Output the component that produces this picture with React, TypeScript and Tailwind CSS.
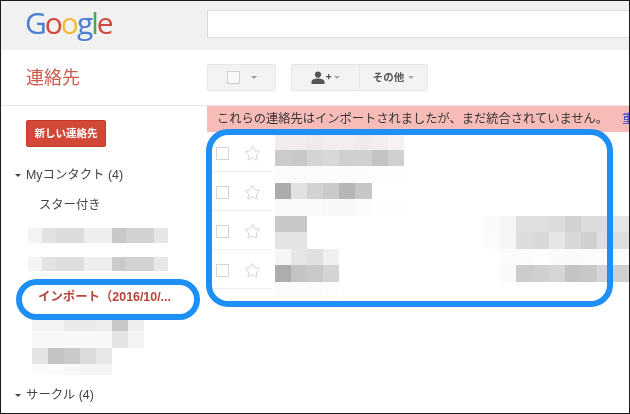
import { Star } from "lucide-react";

const MAIN: (string | number)[][] = [
  ["f2eded","f2eded","f0ebeb","f3eeee","f3eeee","f0ebeb","f3eeee","f6f2f2"],
  ["cbcbcb","c8c8c8","d4d4d4","d8d8d8","cfcfcf","d0d0d0","c4c4c4","d0d0d0"],
  ["fbfbfb","fbfbfb","fbfbfb","fcfcfc","fcfcfc","fcfcfc","fdfdfd","fefefe"],
  ["acacac","e2e2e2","d2d2d2","cacaca","b6b6b6","c6c6c6"],
  ["f9f9f9","fafafa","fafafa","f8f8f8","f8f8f8","fbfbfb","fefefe","fefefe"],
  ["c9c8c8","c9c8c8",...Array(11).fill("ffffff"),"fafafa","f6f5f5","e0dfdf","e0dfdf","dddcdc","d2d1d1","dcdbdb","dcdbdb","e6e5e5"],
  ["e4e4e4","e4e4e4",...Array(11).fill("ffffff"),"fbfbfb","f6f5f5","dcdcdc","d8d8d8","e6e6e6","d8d8d8","d0d0d0","e0e0e0","dedede"],
  ["f6f6f6","e6e6e6","e0e0e0","f0f0f0",...Array(10).fill("ffffff"),"fcfcfc","fbfbfb","fefefe","fafafa","fafafa","fbfbfb","fcfcfc","fbfbfb"],
  ["adadad","c4c4c4","c9c9c9","d4d4d4",...Array(10).fill("ffffff"),"fafafa","cccccc","d0d0d0","d6d6d6","c4c4c4","c8c8c8","d6d6d6","d0d0d0"],
  ["fbfbfb","fbfbfb","fbfbfb","fdfdfd"],
];
const SIDE_A = ["f3f3f3","e2e2e2","dcdcdc","dcdcdc","eeeeee","eeeeee","c8c8c8","d2d2d2","d2d2d2","e6e6e6"];
const SIDE_B = ["f4f4f4","e4e4e4","dedede","dedede","efefef","efefef","cacaca","d4d4d4","d4d4d4","e8e8e8"];
const SIDE_C = [
  ["f3f3f3","f3f3f3","eaeaea","eaeaea","eeeeee","c8c8c8","eeeeee"],
  ["f8f8f8","f8f8f8","f8f8f8","f8f8f8","f8f8f8","e4e4e4","f3f3f3"],
  ["e4e4e4","c4c4c4","c9c9c9","dcdcdc","e8e8e8"],
  ["fafafa","fbfbfb","f8f8f8","f4f4f4","f4f4f4"],
];

function Cells({ row, cell }: { row: (string | number)[]; cell: string }) {
  return (
    <>
      {row.map((c, i) => (
        <div key={i} className={`${cell} h-full shrink-0`} style={{ backgroundColor: `#${c}` }} />
      ))}
    </>
  );
}

function Caret({ color }: { color: string }) {
  return <span className={`inline-block w-0 h-0 border-x-[3px] border-x-transparent border-t-[3px] ${color}`} />;
}

function ListRowHead({ first }: { first?: boolean }) {
  return (
    <div className={`${first ? "h-[40px] pt-[4px]" : "h-[39px] pt-[2px]"} w-[65px] flex items-center border-b border-[#eeeeee] pl-[9px]`}>
      <span className="w-[13px] h-[13px] border border-[#d4d4d4] bg-white" />
      <Star className="ml-[15px] text-[#cfcfcf]" size={17} strokeWidth={1.3} />
    </div>
  );
}

export default function App() {
  return (
    <div
      className="relative w-[630px] h-[414px] box-border overflow-hidden border border-[#1a1a1a] bg-white text-[#444444]"
      style={{ fontFamily: '"Liberation Sans","Noto Sans CJK JP",sans-serif' }}
    >
      <div className="blur-[0.4px]">
        <header className="h-[49px] bg-[#f1f1f1] flex items-center">
          <div
            className="w-[206px] pl-[24px] text-[30px] font-medium leading-none tracking-[-2px] pb-[6px]"
            style={{ fontFamily: '"Open Sans",sans-serif' }}
          >
            <span className="text-[#4a7fd6]">G</span>
            <span className="text-[#d2493c]">o</span>
            <span className="text-[#eebb3c]">o</span>
            <span className="text-[#4a7fd6]">g</span>
            <span className="text-[#4aa65a]">l</span>
            <span className="text-[#d2493c]">e</span>
          </div>
          <div className="flex-1 h-[28px] mb-[4px] bg-white border border-[#dcdcdc] border-r-0" />
        </header>

        <div className="h-[56px] flex items-center border-b border-[#e8e8e8]">
          <div className="w-[206px] pl-[25px] text-[18px] text-[#cc5a4e] leading-none">連絡先</div>
          <div className="flex items-center">
            <div className="w-[69px] h-[27px] flex items-center justify-center gap-[11px] bg-[#f3f3f3] border border-[#e6e6e6] rounded-[2px]">
              <span className="w-[13px] h-[13px] border border-[#cfcfcf] bg-[#f8f8f8]" />
              <Caret color="border-t-[#999999]" />
            </div>
            <div className="ml-[15px] h-[27px] flex bg-[#f3f3f3] border border-[#e6e6e6] rounded-[2px]">
              <div className="w-[68px] flex items-center justify-center gap-[2px] border-r border-[#e6e6e6]">
                <svg width="21" height="14" viewBox="0 0 21 14" className="text-[#555555]" fill="currentColor">
                  <circle cx="7" cy="3.6" r="3.1" />
                  <path d="M0.5 13v-2.2C0.5 8.6 4 7.6 7 7.6s6.5 1 6.5 3.2V13z" />
                  <path d="M15 5h2V3h1.2v2h2v1.2h-2v2H17v-2h-2z" />
                </svg>
                <Caret color="border-t-[#aaaaaa]" />
              </div>
              <div className="w-[67px] flex items-center justify-center gap-[4px] text-[10.5px] font-bold text-[#555555]">
                その他
                <Caret color="border-t-[#aaaaaa]" />
              </div>
            </div>
          </div>
        </div>

        <div className="flex">
          <aside className="w-[206px] shrink-0 flex flex-col">
            <button className="ml-[25px] mt-[14px] w-[80px] h-[27px] rounded-[2px] bg-[#d14836] border border-[#c53727] text-white text-[10.5px] font-bold">
              新しい連絡先
            </button>
            <div className="mt-[18px] h-[20px] pl-[14px] flex items-center gap-[5px] text-[12.4px]">
              <Caret color="border-t-[#444444]" />
              <span>Myコンタクト (4)</span>
            </div>
            <div className="mt-[10px] h-[20px] pl-[38px] flex items-center text-[12.3px]">スター付き</div>
            <div className="mt-[13px] ml-[27px] h-[15px] flex"><Cells row={SIDE_A} cell="w-[14px]" /></div>
            <div className="mt-[14px] ml-[27px] h-[14px] flex"><Cells row={SIDE_B} cell="w-[14px]" /></div>
            <div className="mt-[16px] h-[20px] pl-[37px] flex items-center text-[12.4px] font-bold text-[#b8433a] whitespace-nowrap">
              インポート（2016/10/...
            </div>
            <div className="mt-[13px] ml-[31px] flex flex-col">
              {SIDE_C.map((r, i) => (
                <div key={i} className={`flex ${i === 0 ? "h-[11px]" : i === 3 ? "h-[11px]" : "h-[16.5px]"}`}>
                  <Cells row={r} cell="w-4" />
                </div>
              ))}
            </div>
            <div className="mt-[10px] h-[20px] pl-[14px] flex items-center gap-[5px] text-[12.4px]">
              <Caret color="border-t-[#444444]" />
              <span>サークル (4)</span>
            </div>
          </aside>

          <main className="flex-1 min-w-0">
            <div className="h-[26px] bg-[#f8bcb8] pl-[10px] pt-[1px] flex items-center text-[12.25px] text-[#333333] whitespace-nowrap overflow-hidden">
              これらの連絡先はインポートされましたが、まだ統合されていません。
              <span className="ml-[14px] text-[#2f45c4]">重</span>
            </div>
            <div className="flex">
              <div className="w-[65px] shrink-0 flex flex-col">
                <ListRowHead first />
                <ListRowHead />
                <ListRowHead />
                <ListRowHead />
              </div>
              <div className="ml-[3px] mt-[1px] flex flex-col">
                {MAIN.map((r, i) => (
                  <div key={i} className="flex h-[16.5px]">
                    <Cells row={r} cell="w-[16.1px]" />
                  </div>
                ))}
              </div>
            </div>
          </main>
        </div>
      </div>

      <div className="absolute left-[205px] top-[128px] w-[407px] h-[178px] border-[6.5px] border-[#1e8ff5] rounded-[22px]" />
      <div className="absolute left-[15px] top-[278px] w-[184px] h-[41px] border-[6.5px] border-[#1e8ff5] rounded-full" />
    </div>
  );
}
